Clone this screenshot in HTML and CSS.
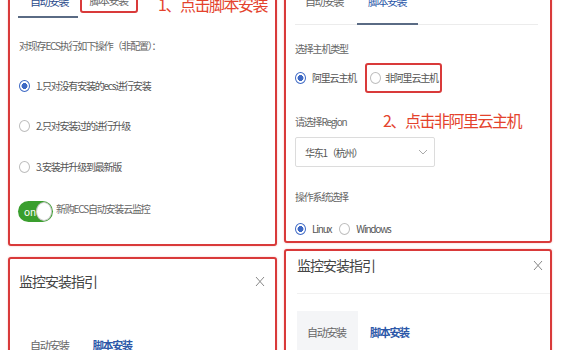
FILE: index.html
```html
<!DOCTYPE html>
<html lang="zh-CN">
<head>
<meta charset="UTF-8" />
<meta name="viewport" content="width=device-width, initial-scale=1" />
<title>监控安装指引</title>
<link rel="stylesheet" href="styles.css">
</head>
<body>
  <div class="page">
    <div class="col col-left">
      <div class="panel panel-auto">
        <div class="tabs-a">
          <span class="tab-a active">自动安装</span>
          <span class="tab-a boxed">脚本安装</span>
          <span class="note note-1">1、点击脚本安装</span>
        </div>
        <div class="label desc">对现存ECS执行如下操作（非配置）：</div>
        <div class="radio row-opt"><span class="dot on"></span>1.只对没有安装的ecs进行安装</div>
        <div class="radio row-opt"><span class="dot"></span>2.只对安装过的进行升级</div>
        <div class="radio row-opt"><span class="dot"></span>3.安装并升级到最新版</div>
        <div class="switch-row">
          <span class="switch"><span class="switch-text">on</span><span class="knob"></span></span>
          <span class="label">新购ECS自动安装云监控</span>
        </div>
      </div>
      <div class="panel panel-dlg dlg-left">
        <div class="dlg-head">
          <span class="dlg-title">监控安装指引</span>
          <svg class="close" width="10" height="11" viewBox="0 0 10 11"><path d="M1 1l8 9M9 1l-8 9" stroke="#888" stroke-width="1" fill="none"/></svg>
        </div>
        <div class="dlg-tabs">
          <span class="dlg-tab">自动安装</span>
          <span class="dlg-tab blue">脚本安装</span>
        </div>
      </div>
    </div>

    <div class="col col-right">
      <div class="panel panel-script">
        <div class="tabs-b">
          <span class="tab-b">自动安装</span>
          <span class="tab-b active">脚本安装</span>
        </div>
        <div class="label host-title">选择主机类型</div>
        <div class="host-row">
          <div class="radio"><span class="dot on"></span>阿里云主机</div>
          <div class="radio host-box"><span class="dot"></span>非阿里云主机</div>
        </div>
        <div class="region-row">
          <span class="label">请选择Region</span>
          <span class="note note-2">2、点击非阿里云主机</span>
        </div>
        <div class="select">
          <span>华东1（杭州）</span>
          <svg width="10" height="6" viewBox="0 0 10 6"><path d="M1 1l4 4 4-4" stroke="#aaa" stroke-width="1" fill="none"/></svg>
        </div>
        <div class="label os-title">操作系统选择</div>
        <div class="os-row">
          <div class="radio"><span class="dot on"></span>Linux</div>
          <div class="radio"><span class="dot"></span>Windows</div>
        </div>
      </div>
      <div class="panel panel-dlg dlg-right">
        <div class="dlg-head lined">
          <span class="dlg-title">监控安装指引</span>
          <svg class="close" width="10" height="11" viewBox="0 0 10 11"><path d="M1 1l8 9M9 1l-8 9" stroke="#888" stroke-width="1" fill="none"/></svg>
        </div>
        <div class="dlg-tabs">
          <span class="dlg-tab grey">自动安装</span>
          <span class="dlg-tab blue">脚本安装</span>
        </div>
      </div>
    </div>
  </div>
</body>
</html>
```

FILE: styles.css
```css
* {
  box-sizing: border-box;
}
body {
  margin: 0;
  background: #fff;
  font-family: "Noto Sans CJK SC", "Noto Sans", sans-serif;
  color: #555;
  overflow: hidden;
}
.page {
  display: flex;
  gap: 7px;
  padding-left: 8px;
  margin-top: -12px;
}
.col {
  display: flex;
  flex-direction: column;
  width: 269px;
}
.col-left {
  gap: 11px;
}
.col-right {
  gap: 6px;
  width: 268px;
}
.panel {
  border: 2px solid #d93a3a;
  border-radius: 3px;
  background: #fff;
  box-shadow: 0 0 2px rgb(217 58 58 / 0.35);
}
.label {
  font-size: 10px;
  line-height: 16px;
  letter-spacing: -1.2px;
  color: #666;
  white-space: nowrap;
}

/* radios */
.radio {
  display: flex;
  align-items: center;
  gap: 6px;
  font-size: 10px;
  line-height: 16px;
  letter-spacing: -1.2px;
  color: #555;
  white-space: nowrap;
}
.dot {
  width: 11px;
  height: 12px;
  border-radius: 50%;
  border: 1px solid #bdbdbd;
  flex-shrink: 0;
  background: #fff;
}
.dot.on {
  border-color: #3d68c4;
  background: radial-gradient(circle, #3d68c4 0 2.8px, #fff 3.2px);
}

/* top left panel */
.panel-auto {
  height: 258px;
  padding: 0 8px;
}
.tabs-a {
  display: flex;
  align-items: flex-start;
}
.tab-a {
  font-size: 11px;
  letter-spacing: -1.5px;
  line-height: 22px;
  white-space: nowrap;
}
.tab-a.active {
  width: 62px;
  padding: 0 0 4px 12px;
  border-bottom: 2px solid #5a6b84;
  color: #2c4c8c;
}
.tab-a.boxed {
  margin-left: 2px;
  width: 61px;
  height: 23px;
  border: 2px solid #d93a3a;
  border-radius: 3px;
  padding-left: 8px;
  line-height: 17px;
  color: #666;
}
.note {
  color: #e4432d;
  font-size: 16px;
  letter-spacing: -1.5px;
  line-height: 20px;
  white-space: nowrap;
}
.note-1 {
  margin-left: 20px;
  margin-top: 4px;
}
.desc {
  margin-top: 20px;
  padding-left: 1px;
}
.row-opt {
  margin-top: 24px;
  padding-left: 1px;
}
.row-opt + .row-opt + .row-opt {
  margin-top: 25px;
}
.switch-row {
  display: flex;
  align-items: flex-start;
  gap: 3px;
  margin-top: 26px;
}
.switch {
  display: flex;
  align-items: center;
  justify-content: space-between;
  width: 35px;
  height: 21px;
  border-radius: 11px;
  background: #3a9e2e;
  padding: 0 1px 0 6px;
}
.switch-text {
  color: #fff;
  font-size: 10px;
  line-height: 1;
}
.knob {
  width: 19px;
  height: 19px;
  border-radius: 50%;
  background: #fff;
  border: 1px solid #c9c9c9;
}

/* top right panel */
.panel-script {
  height: 255px;
  padding: 0 9px;
}
.tabs-b {
  display: flex;
  border-bottom: 1px solid #ececec;
  margin-right: 3px;
}
.tab-b {
  font-size: 11px;
  letter-spacing: -1.5px;
  line-height: 22px;
  padding: 0 0 11px 10px;
  width: 62px;
  color: #666;
  border-bottom: 2px solid transparent;
  margin-bottom: -1px;
}
.tab-b.active {
  width: 61px;
  padding-left: 11px;
  color: #2b57a8;
  border-bottom-color: #5a6b84;
}
.host-title {
  margin-top: 16px;
}
.host-row {
  display: flex;
  align-items: center;
  gap: 9px;
  margin-top: 6px;
}
.host-box {
  height: 30px;
  width: 77px;
  border: 2px solid #d93a3a;
  border-radius: 3px;
  padding-left: 3px;
  gap: 4px;
}
.region-row {
  display: flex;
  align-items: center;
  margin-top: 17px;
}
.region-row .label {
  width: 88px;
  margin-top: 4px;
}
.select {
  display: flex;
  align-items: center;
  justify-content: space-between;
  width: 140px;
  height: 30px;
  margin-top: 7px;
  border: 1px solid #dcdcdc;
  border-radius: 2px;
  padding: 0 6px 0 9px;
  font-size: 10px;
  letter-spacing: -1.2px;
  color: #555;
}
.os-title {
  margin-top: 22px;
}
.os-row {
  display: flex;
  gap: 8px;
  margin-top: 16px;
}

/* dialogs */
.panel-dlg {
  height: 120px;
}
.dlg-head {
  display: flex;
  align-items: center;
  justify-content: space-between;
}
.dlg-left .dlg-head {
  padding: 11px 10px 0 9px;
}
.dlg-right .dlg-head {
  padding: 3px 7px 17px 0;
  margin-left: 11px;
  border-bottom: 1px solid #f1f1f1;
}
.dlg-title {
  font-size: 14px;
  letter-spacing: -1px;
  line-height: 22px;
  color: #444;
}
.dlg-tabs {
  display: flex;
  font-size: 11px;
  letter-spacing: -1.3px;
  line-height: 16px;
  color: #666;
}
.dlg-left .dlg-tabs {
  margin-top: 45px;
  padding-left: 20px;
  gap: 24px;
}
.dlg-right .dlg-tabs {
  margin-top: 17px;
  padding-left: 11px;
}
.dlg-tab.grey {
  width: 61px;
  padding: 13px 0 11px 10px;
  background: #f4f5f7;
}
.dlg-right .dlg-tab.blue {
  padding-top: 13px;
  margin-left: 12px;
}
.dlg-tab.blue {
  color: #2b57a8;
  font-weight: 700;
}
```
